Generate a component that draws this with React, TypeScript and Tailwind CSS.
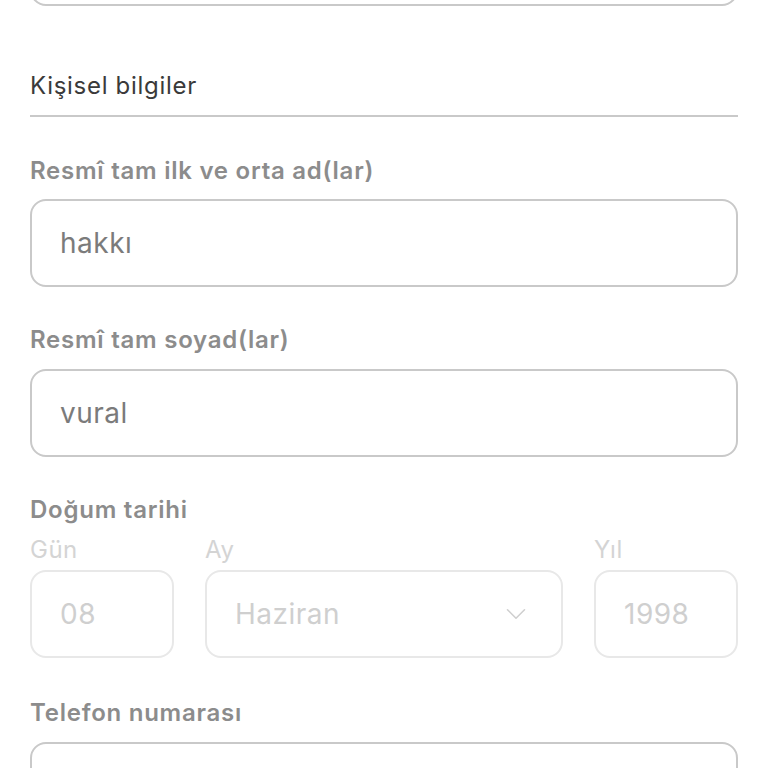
import { ChevronDown } from "lucide-react";

const font = { fontFamily: "Inter, 'Noto Sans', sans-serif" };

function Label({ children, className = "" }: { children: React.ReactNode; className?: string }) {
  return (
    <div className={`text-[24px] leading-[32px] font-semibold tracking-[0.75px] text-[#8c8c8c] ${className}`}>
      {children}
    </div>
  );
}

function TextField({ value, className = "" }: { value?: string; className?: string }) {
  return (
    <div
      className={`flex h-[88px] items-center rounded-[16px] border-2 border-[#c9c9c9] px-[28px] text-[28px] tracking-[0.5px] text-[#7b7b7b] ${className}`}
    >
      {value}
    </div>
  );
}

export default function App() {
  return (
    <div className="h-[768px] w-[768px] overflow-hidden bg-white px-[30px]" style={font}>
      <div className="-mt-[82px] h-[88px] rounded-[16px] border-2 border-[#c9c9c9]" />

      <h2 className="mt-[64px] text-[24px] leading-[32px] tracking-[0.7px] text-[#3a3a3a]">Kişisel bilgiler</h2>
      <div className="mt-[13px] h-[2px] bg-[#c9c9c9]" />

      <Label className="mt-[38px]">Resmî tam ilk ve orta ad(lar)</Label>
      <TextField value="hakkı" className="mt-[12px]" />

      <Label className="mt-[37px]">Resmî tam soyad(lar)</Label>
      <TextField value="vural" className="mt-[13px]" />

      <Label className="mt-[37px]">Doğum tarihi</Label>
      <div className="mt-[8px] flex gap-[31px]">
        <div className="w-[144px]">
          <div className="text-[24px] leading-[32px] tracking-[0.5px] text-[#d4d4d4]">Gün</div>
          <div className="mt-[4px] flex h-[88px] items-center rounded-[16px] border-2 border-[#e8e8e8] px-[28px] text-[28px] tracking-[0.5px] text-[#cfcfcf]">
            08
          </div>
        </div>
        <div className="flex-1">
          <div className="text-[24px] leading-[32px] tracking-[0.5px] text-[#d4d4d4]">Ay</div>
          <div className="mt-[4px] flex h-[88px] items-center justify-between rounded-[16px] border-2 border-[#e8e8e8] pl-[28px] pr-[28px] text-[28px] tracking-[0.5px] text-[#cfcfcf]">
            <span>Haziran</span>
            <ChevronDown className="h-[34px] w-[34px] text-[#cfcfcf]" strokeWidth={1.1} />
          </div>
        </div>
        <div className="w-[144px]">
          <div className="text-[24px] leading-[32px] tracking-[0.5px] text-[#d4d4d4]">Yıl</div>
          <div className="mt-[4px] flex h-[88px] items-center rounded-[16px] border-2 border-[#e8e8e8] px-[28px] text-[28px] tracking-[0.5px] text-[#cfcfcf]">
            1998
          </div>
        </div>
      </div>

      <Label className="mt-[39px]">Telefon numarası</Label>
      <TextField className="mt-[13px]" />
    </div>
  );
}
